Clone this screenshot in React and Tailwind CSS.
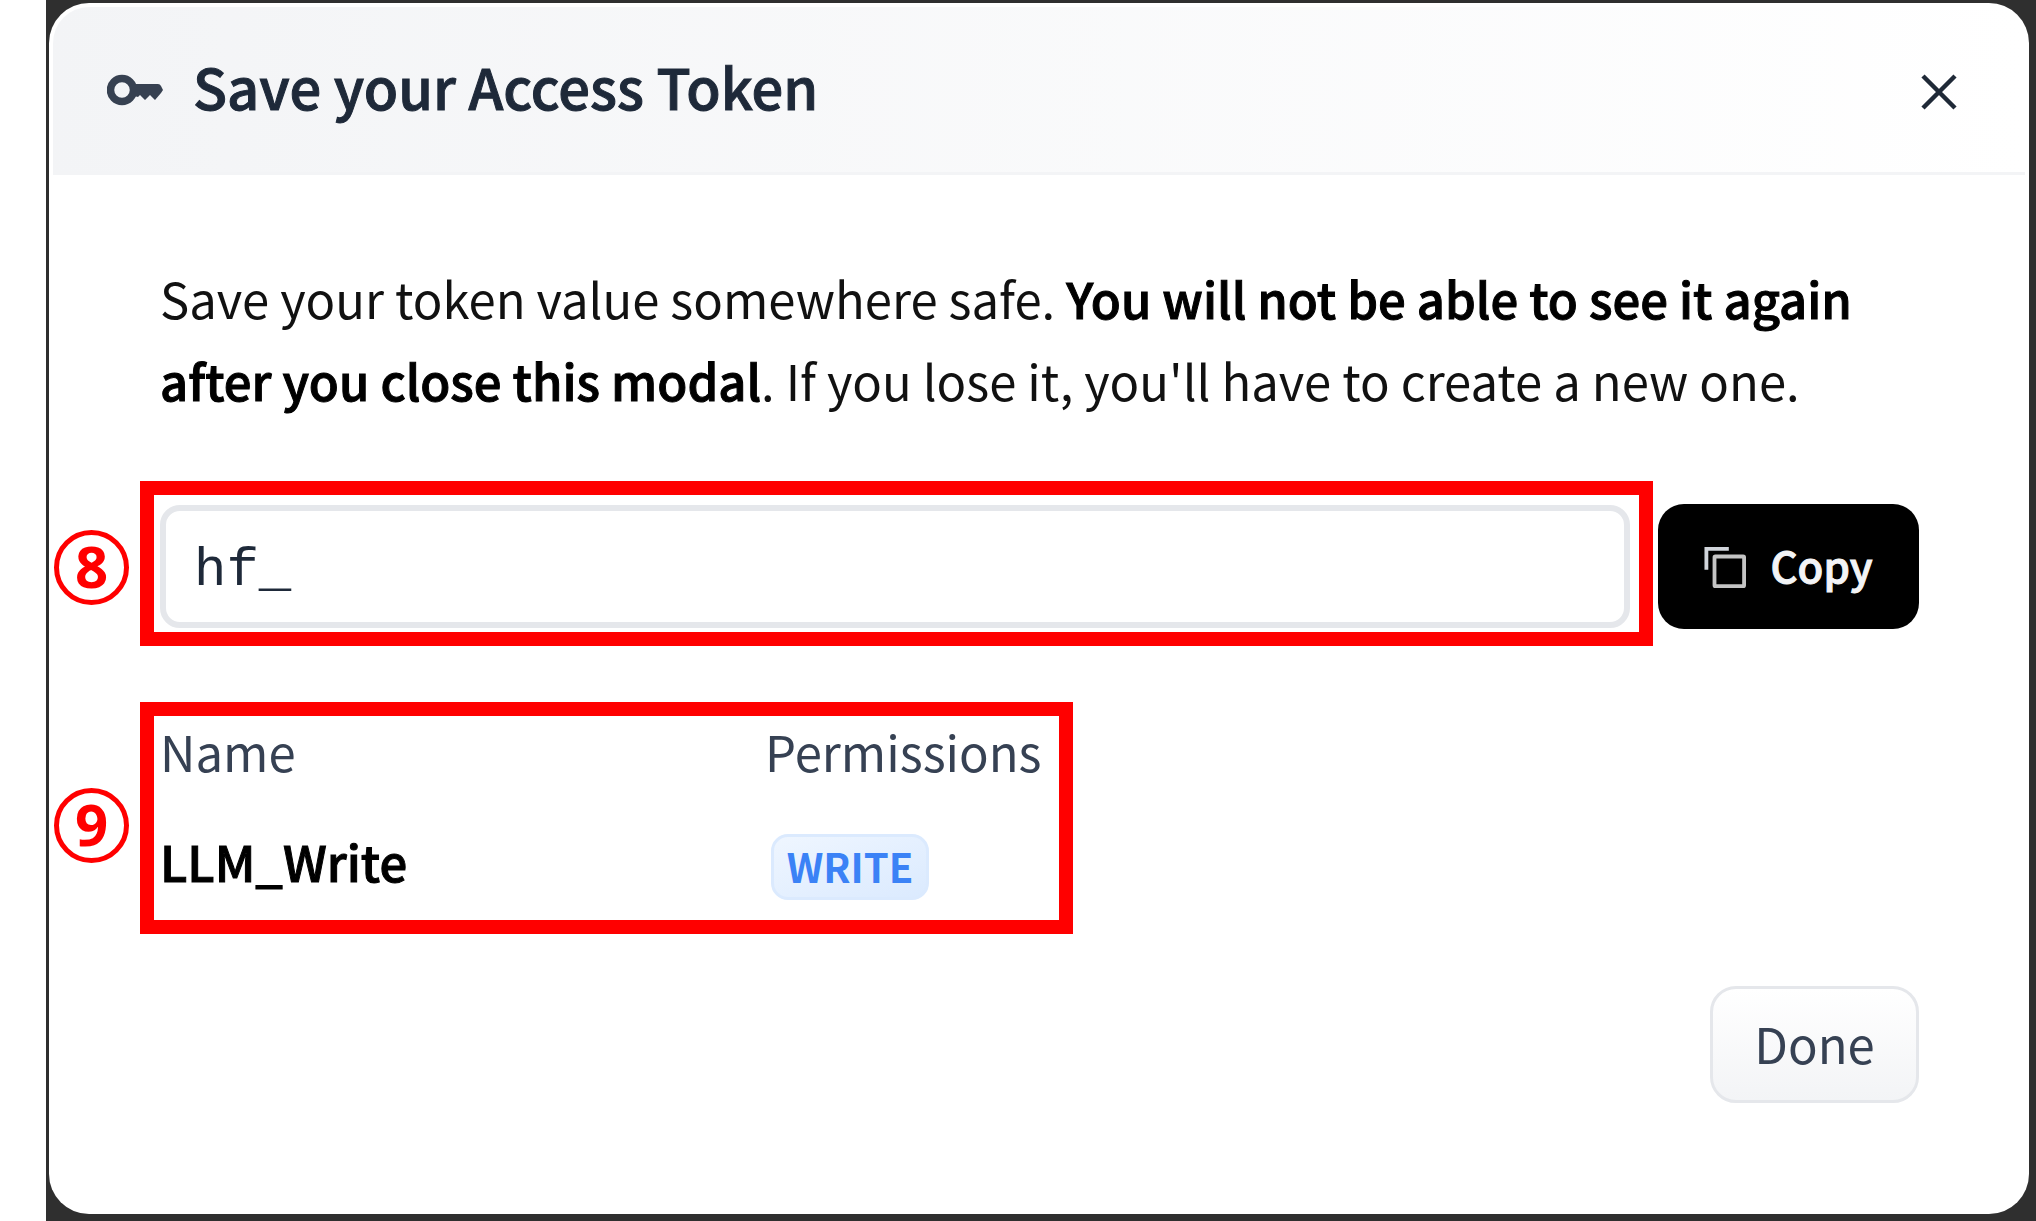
import { useState } from "react";
import clsx from "clsx";

function KeyIcon() {
  return (
    <svg className="w-14 h-9" viewBox="0 0 56 36" fill="none" aria-hidden="true">
      <circle cx="15" cy="18" r="11.5" stroke="#374151" strokeWidth="7.5" />
      <path
        d="M27 12H51Q53 12 54 14L56 18L54 21L48 28L43 23L38 28L33 23L31 25L27 24Z"
        fill="#374151"
      />
    </svg>
  );
}

function CopyIcon() {
  return (
    <svg className="w-[42px] h-[42px]" viewBox="0 0 44 44" fill="none" aria-hidden="true">
      <path d="M2.5 25V3H26" stroke="#d1d5db" strokeWidth="4" />
      <rect x="11" y="11" width="31" height="31" rx="1" stroke="#c4c4c4" strokeWidth="4" />
    </svg>
  );
}

function CloseIcon() {
  return (
    <svg className="w-9 h-9" viewBox="0 0 36 36" fill="none" aria-hidden="true">
      <path d="M2 2L34 34M34 2L2 34" stroke="#1f2937" strokeWidth="4.5" />
    </svg>
  );
}

function Highlight({ className }) {
  return (
    <div
      className={clsx(
        "absolute -top-6 -left-5 -right-[23px] border-[14px] border-[#ff0000] pointer-events-none",
        className
      )}
    />
  );
}

function StepNumber({ className, children }) {
  return (
    <span
      className={clsx(
        "absolute -left-[106px] flex items-center justify-center w-[75px] h-[75px] pb-1 rounded-full border-[5px] border-[#ff0000] font-['Open_Sans',sans-serif] text-[58px] leading-none font-bold text-[#ff0000]",
        className
      )}
    >
      {children}
    </span>
  );
}

function App() {
  const [token, setToken] = useState("hf_");

  function handleCopy() {
    navigator.clipboard?.writeText(token);
  }

  return (
    <div className="min-h-screen flex bg-white pl-[46px] font-['Noto_Sans_CJK_JP',sans-serif]">
      <div className="flex-1 flex bg-[#2f2f2f] pt-[3px] pr-[7px] pb-[7px] pl-[3px]">
        <div
          role="dialog"
          aria-labelledby="title"
          className="flex-1 flex flex-col bg-white rounded-[40px]"
        >
          <header className="flex items-center gap-[30px] m-1 mb-0 pl-[54px] pr-[68px] h-[168px] rounded-t-[36px] border-b-[3px] border-gray-100 bg-linear-to-r from-gray-100 to-white">
            <KeyIcon />
            <h1
              id="title"
              className="pb-2 text-[56px] leading-[84px] font-medium text-gray-800 [-webkit-text-stroke:1px]"
            >
              Save your Access Token
            </h1>
            <button className="ml-auto pt-1" aria-label="Close">
              <CloseIcon />
            </button>
          </header>

          <div className="pl-[111px] pr-[110px] pt-[82px]">
            <p className="text-[49px] leading-[82px] text-[#111111]">
              Save your token value somewhere safe.{" "}
              <strong className="font-medium text-black [-webkit-text-stroke:1px]">
                You will not be able to see it again after you close this modal
              </strong>
              . If you lose it, you'll have to create a new one.
            </p>

            <div className="flex items-center gap-7 mt-[83px]">
              <div className="relative flex-1 flex">
                <input
                  type="text"
                  aria-label="Access token"
                  className="w-full h-[123px] px-7 pt-2 rounded-[20px] border-[6px] border-gray-200 font-['Liberation_Mono',monospace] text-[54px] text-gray-800 outline-none"
                  value={token}
                  onChange={(e) => setToken(e.target.value)}
                />
                <Highlight className="-bottom-[18px]" />
                <StepNumber className="top-[25px]">8</StepNumber>
              </div>
              <button
                onClick={handleCopy}
                className="flex items-center justify-center gap-6 w-[261px] h-[125px] rounded-[26px] bg-black text-[42px] leading-[60px] font-medium text-gray-100 [-webkit-text-stroke:1px]"
              >
                <CopyIcon />
                <span className="pb-1">Copy</span>
              </button>
            </div>

            <div className="relative w-[890px] mt-[97px]">
              <table className="w-full text-left text-[49px]">
                <thead>
                  <tr className="h-14 align-top leading-[50px] text-gray-700">
                    <th className="w-[605px] font-normal">Name</th>
                    <th className="font-normal">Permissions</th>
                  </tr>
                </thead>
                <tbody>
                  <tr className="align-top leading-[66px]">
                    <td className="pt-[46px] font-medium text-black [-webkit-text-stroke:1px]">
                      LLM_Write
                    </td>
                    <td className="pt-[52px]">
                      <span className="flex items-center justify-center w-[158px] h-[66px] ml-1.5 pb-0.5 rounded-[17px] border-[3px] border-blue-100 bg-linear-to-br from-blue-50 to-blue-100 text-[40px] leading-none font-bold text-[#3b82f6]">
                        WRITE
                      </span>
                    </td>
                  </tr>
                </tbody>
              </table>
              <Highlight className="-bottom-[34px]" />
              <StepNumber className="top-[62px]">9</StepNumber>
            </div>

            <div className="flex justify-end mt-[86px] pb-[100px]">
              <button className="w-[209px] h-[117px] pb-1 rounded-[26px] border-[3px] border-gray-200 bg-linear-to-b from-white to-gray-100 text-[49px] text-gray-700">
                Done
              </button>
            </div>
          </div>
        </div>
      </div>
    </div>
  );
}

export default App;
